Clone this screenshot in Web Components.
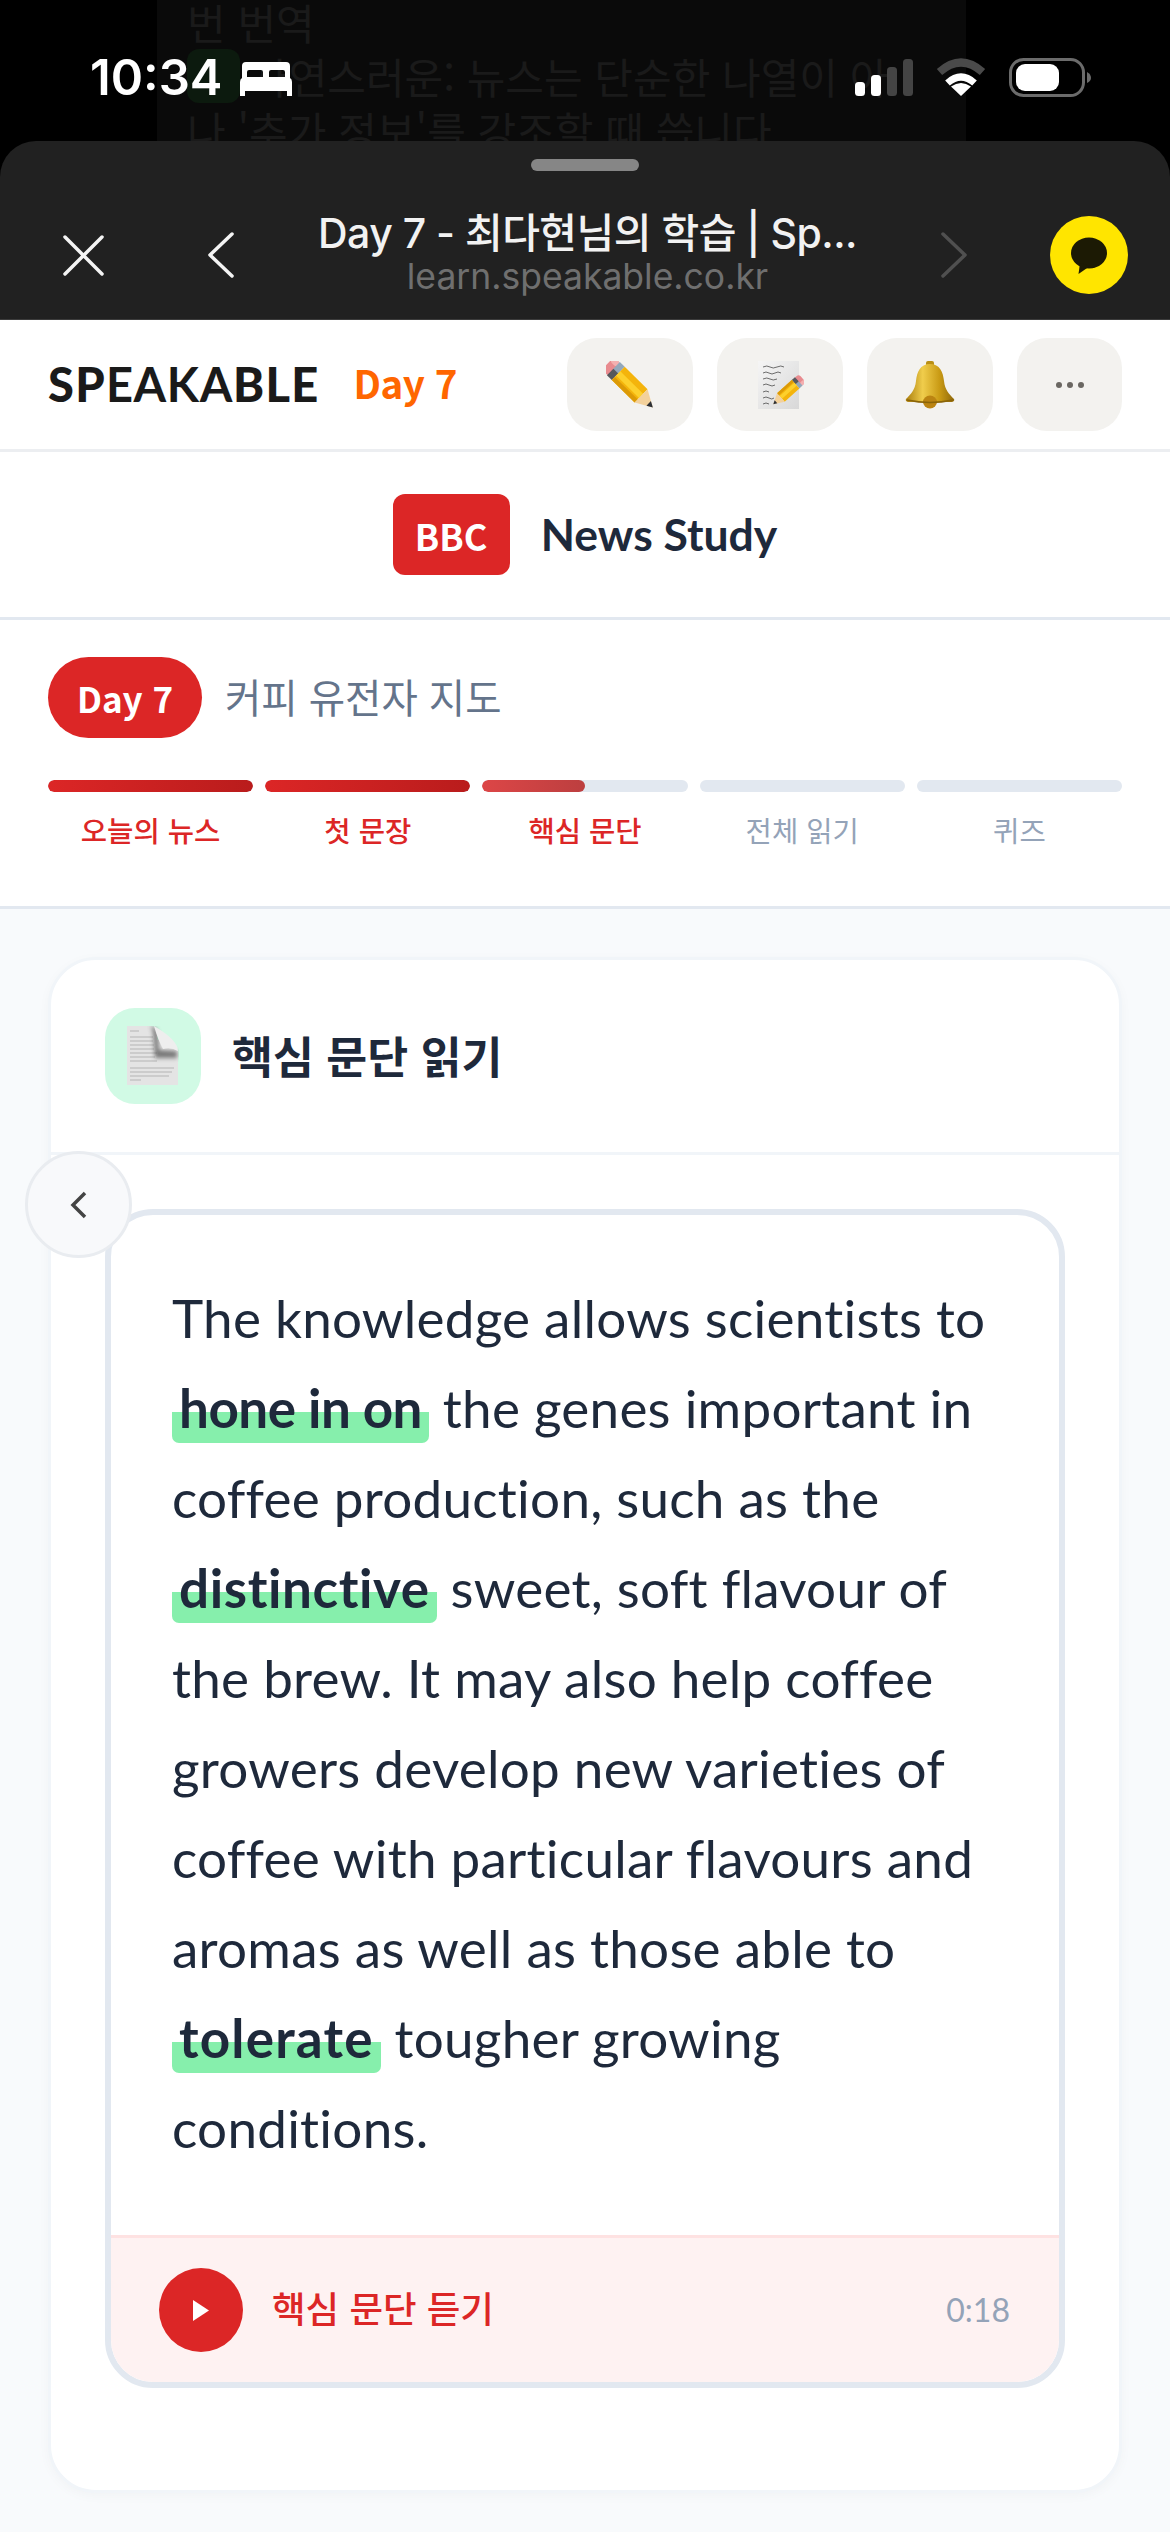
<!DOCTYPE html>
<html lang="ko">
<head>
<meta charset="utf-8">
<title>Speakable</title>
<style>
    html, body { margin: 0; background: #f8fafc; }
    body { font-family: "Noto Sans CJK KR", "Noto Sans", sans-serif; }
    app-page { width: 1170px; height: 2532px; overflow: hidden; }
</style>
</head>
<body>
<app-page>
    <top-chrome title-text="Day 7 - 최다현님의 학습 | Sp..." url="learn.speakable.co.kr" time="10:34"></top-chrome>
    <site-header day="Day 7"></site-header>
    <news-banner source="BBC">News Study</news-banner>
    <day-progress day="Day 7" topic="커피 유전자 지도">
        <progress-step fill="100">오늘의 뉴스</progress-step>
        <progress-step fill="100">첫 문장</progress-step>
        <progress-step fill="50" soft>핵심 문단</progress-step>
        <progress-step fill="0" idle>전체 읽기</progress-step>
        <progress-step fill="0" idle>퀴즈</progress-step>
    </day-progress>
    <study-card heading="핵심 문단 읽기">
        <reading-box listen="핵심 문단 듣기" duration="0:18">The knowledge allows scientists to <key-word style="letter-spacing:-.5px">hone in on</key-word> the genes important in coffee production, such as the <key-word style="letter-spacing:.6px">distinctive</key-word> sweet, soft flavour of the brew. It may also help coffee growers develop new varieties of coffee with particular flavours and aromas as well as those able to <key-word style="letter-spacing:1.2px">tolerate</key-word> tougher growing conditions.</reading-box>
    </study-card>
</app-page>

<script>
const PENCIL = `
    <rect x="-32" y="-9" width="12" height="18" rx="5" fill="#e88b8f"/>
    <rect x="-32" y="-9" width="9" height="6" rx="3" fill="#f4b0b0"/>
    <rect x="-24" y="-9.500" width="7" height="10" fill="#93a8bb"/>
    <rect x="-24" y="0" width="7" height="9.500" fill="#55585c"/>
    <rect x="-17" y="-9.500" width="33" height="19" fill="#f4b40c"/>
    <rect x="-17" y="-3" width="33" height="6" fill="#fdd02c"/>
    <rect x="-17" y="5" width="33" height="4.500" fill="#dc9a06"/>
    <path d="M16 -9.500 L33 0 L16 9.500 Z" fill="#f3d19b"/>
    <path d="M27 -3.300 L33 0 L27 3.300 Z" fill="#2d3036"/>`;

class AppPage extends HTMLElement {
    constructor() {
        super();
        this.attachShadow({ mode: 'open' });
        this.shadowRoot.innerHTML = `
            <style>
                :host { display: block; background: #f8fafc; }
            </style>
            <slot></slot>
        `;
    }
}

class TopChrome extends HTMLElement {
    constructor() {
        super();
        this.attachShadow({ mode: 'open' });
    }

    connectedCallback() {
        this.shadowRoot.innerHTML = `
            <style>
                :host { display: block; background: #000; color: #fff; font-family: Inter, "Noto Sans CJK KR", sans-serif; }
                .top { position: relative; height: 141px; overflow: hidden; }
                .dim {
                    position: absolute; left: 157px; top: 0; width: 809px; height: 141px;
                    background: #0a0a0a; color: #1a1a1a; padding-left: 30px; box-sizing: border-box;
                    font: 400 42px/54px "Noto Sans CJK KR", sans-serif; white-space: nowrap;
                    display: flex; flex-direction: column;
                }
                .dim div { position: relative; top: -5px; }
                .dim .mark { display: inline-block; width: 53px; height: 54px; margin-right: 10px; background: #0c1a0e; border-radius: 12px; vertical-align: top; }
                .status { position: relative; display: flex; align-items: flex-start; padding: 58px 79px 0 90px; }
                .time { font-size: 49px; line-height: 39px; font-weight: 600; }
                .bed { margin: 4px 0 0 18px; }
                .right { margin-left: auto; display: flex; align-items: flex-start; gap: 23px; }
                .sheet {
                    background: #212121; height: 178px; border-radius: 36px 36px 0 0;
                    border-bottom: 1px solid #3c3c3c; box-sizing: content-box;
                    display: flex; flex-direction: column; align-items: stretch;
                }
                .handle { width: 108px; height: 12px; border-radius: 6px; background: #868686; margin: 18px auto 0; }
                .row { display: flex; align-items: center; padding: 0 42px 0 63px; height: 78px; margin-top: 45px; }
                .close { margin-right: 103px; }
                .title { flex: 1; text-align: center; min-width: 0; }
                .name { font-size: 41px; line-height: 46px; font-weight: 500; color: #f2f2f2; white-space: nowrap; letter-spacing: -0.500px; margin-top: -4px; }
                .url { font-size: 35.500px; line-height: 38px; color: #6f6f6f; white-space: nowrap; margin-top: 2px; }
                .talk { margin-left: 82px; }
            </style>
            <div class="top">
                <div class="dim">
                    <div>번 번역</div>
                    <div><span class="mark"></span>자연스러운: 뉴스는 단순한 나열이 아</div>
                    <div>나 '추가 정보'를 강조할 때 씁니다</div>
                </div>
                <div class="status">
                    <span class="time">${this.getAttribute('time')}</span>
                    <svg class="bed" width="52" height="34" viewBox="0 0 52 34">
                        <path fill="#fff" fill-rule="evenodd" d="M6 0 H46 Q50 0 50 4 V16 Q52 17 52 20 V34 H47 V29 H5 V34 H0 V20 Q0 17 2 16 V4 Q2 0 6 0 Z M9 8 Q7 8 7 10 V15 H23 V10 Q23 8 21 8 Z M31 8 Q29 8 29 10 V15 H45 V10 Q45 8 43 8 Z"/>
                    </svg>
                    <div class="right">
                        <svg width="58" height="38" viewBox="0 0 58 38">
                            <rect x="0" y="24" width="10" height="14" rx="3.500" fill="#fff"/>
                            <rect x="16" y="17" width="10" height="21" rx="3.500" fill="#fff"/>
                            <rect x="32" y="9" width="10" height="29" rx="3.500" fill="#444"/>
                            <rect x="48" y="1" width="10" height="37" rx="3.500" fill="#444"/>
                        </svg>
                        <svg width="50" height="38" viewBox="0 0 50 38" fill="none">
                            <path d="M3.500 14 Q25 -5 46.500 14" stroke="#4a4a4a" stroke-width="8"/>
                            <path d="M11.500 25 Q25 13 38.500 25" stroke="#fff" stroke-width="7"/>
                            <path d="M25 38 L15 28.500 Q25 21.500 35 28.500 Z" fill="#fff"/>
                        </svg>
                        <svg width="82" height="40" viewBox="0 0 82 40">
                            <rect x="1.500" y="1.500" width="73" height="36" rx="13" fill="none" stroke="#6b6b6b" stroke-width="3"/>
                            <rect x="7" y="6" width="43" height="27" rx="9" fill="#fff"/>
                            <path d="M78 14 Q82 16 82 20 Q82 23 78 25 Z" fill="#6b6b6b"/>
                        </svg>
                    </div>
                </div>
            </div>
            <div class="sheet">
                <div class="handle"></div>
                <div class="row">
                    <svg class="close" width="41" height="41" viewBox="0 0 41 41" stroke="#f4f4f4" stroke-width="3.500" stroke-linecap="round">
                        <path d="M2 2 L39 39 M39 2 L2 39"/>
                    </svg>
                    <svg width="27" height="46" viewBox="0 0 27 46" fill="none" stroke="#f4f4f4" stroke-width="3.500" stroke-linecap="round" stroke-linejoin="round">
                        <path d="M25 2 L3 23 L25 44"/>
                    </svg>
                    <div class="title">
                        <div class="name">${this.getAttribute('title-text')}</div>
                        <div class="url">${this.getAttribute('url')}</div>
                    </div>
                    <svg width="27" height="46" viewBox="0 0 27 46" fill="none" stroke="#505050" stroke-width="3.500" stroke-linecap="round" stroke-linejoin="round">
                        <path d="M2 2 L24 23 L2 44"/>
                    </svg>
                    <svg class="talk" width="78" height="78" viewBox="0 0 78 78">
                        <circle cx="39" cy="39" r="39" fill="#ffe500"/>
                        <ellipse cx="39" cy="37" rx="18" ry="15.500" fill="#1c1a04"/>
                        <path d="M30 47 L28.500 58 L40 50 Z" fill="#1c1a04"/>
                    </svg>
                </div>
            </div>
        `;
    }
}

class SiteHeader extends HTMLElement {
    constructor() {
        super();
        this.attachShadow({ mode: 'open' });
    }

    connectedCallback() {
        this.shadowRoot.innerHTML = `
            <style>
                :host { display: flex; align-items: center; height: 129px; padding: 0 48px; background: #fff; border-bottom: 3px solid #eceef1; }
                .logo { font: 900 47px/1 Lato, sans-serif; color: #1a1a1a; letter-spacing: 1.300px; white-space: nowrap; }
                .logo span { font-weight: 700; letter-spacing: .600px; }
                .day { margin-left: 34px; margin-top: -5px; font: 700 38.500px/1 "Noto Sans CJK KR", sans-serif; color: #ff6600; letter-spacing: -0.500px; }
                .tools { margin-left: auto; display: flex; gap: 24px; }
            </style>
            <div class="logo">SP<span>EAKA</span>BLE</div>
            <div class="day">${this.getAttribute('day')}</div>
            <div class="tools">
                <tool-button>
                    <svg width="48" height="48" viewBox="0 0 48 48">
                        <g transform="translate(24 24) rotate(44.500) scale(.97)">${PENCIL}</g>
                    </svg>
                </tool-button>
                <tool-button>
                    <svg width="48" height="48" viewBox="0 0 48 48">
                        <defs><linearGradient id="pg" x1="0" y1="0" x2="1" y2="1"><stop offset="0" stop-color="#f5f5f5"/><stop offset="1" stop-color="#d8d8d8"/></linearGradient></defs>
                        <rect x="2" y="0" width="41" height="48" fill="url(#pg)"/>
                        <path d="M7 6 q4 -2 7 0 t7 0 t7 0 M7 12 q3 -2 6 0 t6 0 t6 0 M7 18 q4 -2 7 0 t7 0 M7 24 q3 -2 6 0 t6 0 M7 31 q3 -2 6 0 M7 37 q3 -2 6 0 t5 0 M7 43 q3 -2 6 0" fill="none" stroke="#4b4b4b" stroke-width=".8"/>
                        <g transform="translate(32 30) rotate(-42) scale(.6) rotate(180)">${PENCIL}</g>
                    </svg>
                </tool-button>
                <tool-button>
                    <svg width="50" height="48" viewBox="0 0 50 48">
                        <defs>
                            <linearGradient id="bg" x1="0" y1="0" x2="1" y2="0"><stop offset="0" stop-color="#a97d0c"/><stop offset=".35" stop-color="#f0cd4c"/><stop offset=".7" stop-color="#c99a14"/><stop offset="1" stop-color="#8f680a"/></linearGradient>
                        </defs>
                        <rect x="21" y="0" width="8" height="6" rx="2" fill="#b98f15"/>
                        <path d="M25 3 C35 3 38 11 39 20 C40 29 44 33 49 38 Q50 40 47 41 H3 Q0 40 1 38 C6 33 10 29 11 20 C12 11 15 3 25 3 Z" fill="url(#bg)"/>
                        <ellipse cx="25" cy="41" rx="7" ry="6.500" fill="#bb8412"/>
                        <path d="M2 39 Q25 44 48 39" fill="none" stroke="#8a6408" stroke-width="1.500"/>
                    </svg>
                </tool-button>
                <tool-button narrow>
                    <svg width="28" height="8" viewBox="0 0 28 8" fill="#6a6762">
                        <circle cx="3" cy="4" r="3"/><circle cx="14" cy="4" r="3"/><circle cx="25" cy="4" r="3"/>
                    </svg>
                </tool-button>
            </div>
        `;
    }
}

class ToolButton extends HTMLElement {
    constructor() {
        super();
        this.attachShadow({ mode: 'open' });
        this.shadowRoot.innerHTML = `
            <style>
                :host { display: flex; align-items: center; justify-content: center; width: 126px; height: 93px; border-radius: 30px; background: #f3f2ef; }
                :host([narrow]) { width: 105px; }
            </style>
            <slot></slot>
        `;
    }
}

class NewsBanner extends HTMLElement {
    constructor() {
        super();
        this.attachShadow({ mode: 'open' });
    }

    connectedCallback() {
        this.shadowRoot.innerHTML = `
            <style>
                :host { display: flex; align-items: center; justify-content: center; gap: 31px; height: 165px; background: #fff; border-bottom: 3px solid #e2e8f0; }
                .badge {
                    width: 117px; height: 81px; border-radius: 12px; background: #dc2626; color: #fff;
                    display: flex; align-items: center; justify-content: center;
                    font: 700 36px/1 "Noto Sans CJK KR", "Noto Sans", sans-serif;
                }
                .name { font: 700 44.500px/1 Lato, sans-serif; color: #1e293b; }
            </style>
            <div class="badge">${this.getAttribute('source')}</div>
            <div class="name"><slot></slot></div>
        `;
    }
}

class DayProgress extends HTMLElement {
    constructor() {
        super();
        this.attachShadow({ mode: 'open' });
    }

    connectedCallback() {
        this.shadowRoot.innerHTML = `
            <style>
                :host { display: block; padding: 37px 48px 0; height: 249px; background: #fff; border-bottom: 3px solid #e2e8f0; }
                .head { display: flex; align-items: center; gap: 23px; }
                .pill {
                    width: 154px; height: 81px; border-radius: 41px; background: #dc2626; color: #fff;
                    display: flex; align-items: center; justify-content: center;
                    font: 700 35px/1 "Noto Sans CJK KR", sans-serif;
                }
                .topic { font: 400 39.500px/1 "Noto Sans CJK KR", sans-serif; color: #64748b; margin-top: -3px; }
                .steps { display: grid; grid-template-columns: repeat(5, 1fr); gap: 12px; margin-top: 42px; }
            </style>
            <div class="head">
                <div class="pill">${this.getAttribute('day')}</div>
                <div class="topic">${this.getAttribute('topic')}</div>
            </div>
            <div class="steps"><slot></slot></div>
        `;
    }
}

class ProgressStep extends HTMLElement {
    constructor() {
        super();
        this.attachShadow({ mode: 'open' });
    }

    connectedCallback() {
        const fill = this.getAttribute('fill');
        this.shadowRoot.innerHTML = `
            <style>
                :host { display: block; font: 500 28.600px/38px "Noto Sans CJK KR", sans-serif; color: #dc2626; text-align: center; }
                :host([idle]) { color: #94a3b8; font-weight: 400; }
                .track { height: 12px; border-radius: 6px; background: #e2e8f0; overflow: hidden; margin-bottom: 19px; }
                .bar { height: 100%; width: ${fill}%; border-radius: 6px; background: linear-gradient(90deg, #dc2626, #b91c1c); }
                :host([soft]) .bar { opacity: .92; background: linear-gradient(90deg, #dc3838, #b93030); }
            </style>
            <div class="track"><div class="bar"></div></div>
            <slot></slot>
        `;
    }
}

class StudyCard extends HTMLElement {
    constructor() {
        super();
        this.attachShadow({ mode: 'open' });
    }

    connectedCallback() {
        this.shadowRoot.innerHTML = `
            <style>
                :host {
                    display: block; position: relative; margin: 48px 48px 0; background: #fff;
                    border: 3px solid #f1f5f9; border-radius: 48px; box-shadow: 0 3px 12px rgba(15,23,42,.03);
                }
                .head { display: flex; align-items: center; gap: 31px; padding: 48px 54px; border-bottom: 3px solid #f1f5f9; }
                .icon { width: 96px; height: 96px; border-radius: 30px; background: #d1fae5; display: flex; align-items: center; justify-content: center; }
                h2 { margin: -2px 0 0; font: 700 44.500px/1 "Noto Sans CJK KR", sans-serif; color: #1e293b; }
                .body { padding: 54px 54px 102px; }
                .back {
                    position: absolute; left: -26px; top: 191px; width: 107px; height: 107px; box-sizing: border-box;
                    border-radius: 50%; background: #f8f9fb; border: 3px solid #e9ecf0;
                    display: flex; align-items: center; justify-content: center;
                }
            </style>
            <div class="head">
                <div class="icon">
                    <svg width="52" height="60" viewBox="0 0 52 60">
                        <defs>
                            <filter id="soft" x="-20%" y="-20%" width="140%" height="140%"><feGaussianBlur stdDeviation="2"/></filter>
                            <filter id="fine"><feGaussianBlur stdDeviation=".4"/></filter>
                        </defs>
                        <path d="M0 0 H24 Q30 0 30 6 V14 Q38 12 44 18 Q51 20 51 26 V59 H0 Z" fill="#e4e4e4"/>
                        <path d="M3 5 H12 M3 11 H26 M3 15 H26 M3 19 H27 M3 23 H27 M3 27 H30 M3 31 H28 M3 35 H30 M3 42 H47 M3 46 H45 M3 50 H42 M3 54 H14" stroke="#b4b4b4" stroke-width="1.200" filter="url(#fine)"/>
                        <path d="M24 0 Q30 1 31 8 L32 24 L50 25 L50 32 L28 32 L26 6 Z" fill="#555" opacity=".75" filter="url(#soft)"/>
                        <path d="M27 0 Q51 14 51 25 Q44 21 36 23 Q31 14 27 0 Z" fill="#eeeeee"/>
                    </svg>
                </div>
                <h2>${this.getAttribute('heading')}</h2>
            </div>
            <div class="body"><slot></slot></div>
            <div class="back">
                <svg width="17" height="28" viewBox="0 0 17 28" fill="none" stroke="#444" stroke-width="3.500" stroke-linejoin="miter">
                    <path d="M15 2 L3 14 L15 26"/>
                </svg>
            </div>
        `;
    }
}

class ReadingBox extends HTMLElement {
    constructor() {
        super();
        this.attachShadow({ mode: 'open' });
    }

    connectedCallback() {
        this.shadowRoot.innerHTML = `
            <style>
                :host { display: block; border: 6px solid #e2e8f0; border-radius: 48px; overflow: hidden; background: #fff; }
                .text { padding: 58px 40px 62px 61px; font: 400 53px/90px Lato, sans-serif; color: #1e293b; letter-spacing: .25px; }
                .foot {
                    display: flex; align-items: center; gap: 29px; padding: 30px 49px 30px 48px;
                    background: #fef2f2; border-top: 3px solid #fee2e2;
                }
                .play { width: 84px; height: 84px; border-radius: 50%; background: #dc2626; display: flex; align-items: center; justify-content: center; }
                .label { font: 500 36.500px/1 "Noto Sans CJK KR", sans-serif; color: #dc2626; margin-top: -4px; }
                .time { margin-left: auto; font: 400 32px/1 Lato, sans-serif; color: #94a3b8; }
            </style>
            <div class="text"><slot></slot></div>
            <div class="foot">
                <div class="play">
                    <svg width="16" height="21" viewBox="0 0 16 21"><path d="M0 0 L16 10.500 L0 21 Z" fill="#fff"/></svg>
                </div>
                <span class="label">${this.getAttribute('listen')}</span>
                <span class="time">${this.getAttribute('duration')}</span>
            </div>
        `;
    }
}

class KeyWord extends HTMLElement {
    constructor() {
        super();
        this.attachShadow({ mode: 'open' });
        // no whitespace around the slot: it would show as a space inside the highlight
        this.shadowRoot.innerHTML = `<style>
                :host {
                    display: inline; font-weight: 700; padding: 0 7px 4px;
                    background: linear-gradient(#86efac, #86efac) left bottom / 100% 31px no-repeat;
                    border-radius: 0 0 7px 7px;
                }
            </style><slot></slot>`;
    }
}

customElements.define('app-page', AppPage);
customElements.define('top-chrome', TopChrome);
customElements.define('site-header', SiteHeader);
customElements.define('tool-button', ToolButton);
customElements.define('news-banner', NewsBanner);
customElements.define('day-progress', DayProgress);
customElements.define('progress-step', ProgressStep);
customElements.define('study-card', StudyCard);
customElements.define('reading-box', ReadingBox);
customElements.define('key-word', KeyWord);
</script>
</body>
</html>
